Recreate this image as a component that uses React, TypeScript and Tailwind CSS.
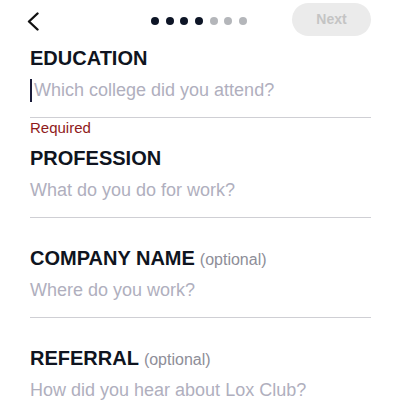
import React from "react";

const font = { fontFamily: '"Liberation Sans", Arial, sans-serif' };

function Field({
  label,
  optional,
  placeholder,
  cursor,
  required,
}: {
  label: string;
  optional?: boolean;
  placeholder: string;
  cursor?: boolean;
  required?: boolean;
}) {
  return (
    <div>
      <div className="h-[24px] leading-[24px] flex items-baseline">
        <span className="text-[20px] font-bold text-[#0f1420]">{label}</span>
        {optional && (
          <span className="ml-[5px] text-[16px] text-[#8e8e98]">(optional)</span>
        )}
      </div>
      <div className="mt-[8px] h-[24px] flex items-center">
        {cursor && <div className="w-[2px] h-[23px] bg-[#1a1c3a] mr-[2px]" />}
        <span className="text-[18px] leading-[24px] text-[#b0afbe]">{placeholder}</span>
      </div>
      <div className="mt-[15px] h-px bg-[#cfcfd4]" />
      {required && (
        <div className="mt-[1px] h-[18px] leading-[18px] text-[15px] text-[#8f1b1b]">
          Required
        </div>
      )}
    </div>
  );
}

export default function App() {
  return (
    <div className="w-[400px] h-[406px] bg-white overflow-hidden" style={font}>
      <div className="h-[40px] grid grid-cols-[1fr_auto_1fr] items-center px-[27px] pr-[29px]">
        <div className="flex items-center">
          <svg width="12" height="19" viewBox="0 0 12 19" className="mt-[3px]">
            <polyline
              points="10.5,1.5 2,9.5 10.5,17.5"
              fill="none"
              stroke="#111"
              strokeWidth="2.4"
              strokeLinecap="round"
              strokeLinejoin="round"
            />
          </svg>
        </div>
        <div className="flex items-center gap-[6.7px] mt-[1px]">
          {[0, 1, 2, 3, 4, 5, 6].map((i) => (
            <div
              key={i}
              className={
                i < 4
                  ? "w-[8px] h-[8px] rounded-full bg-[#0d1526]"
                  : "w-[8px] h-[8px] rounded-full bg-[#b4b6ba]"
              }
            />
          ))}
        </div>
        <div className="flex justify-end">
          <div className="w-[79px] h-[33px] mt-[-1px] rounded-full bg-[#ebebeb] flex items-center justify-center text-[14px] font-bold text-[#c4c4c4]">
            Next
          </div>
        </div>
      </div>
      <div className="px-[30px] pr-[29px] pt-[6px]">
        <Field
          label="EDUCATION"
          placeholder="Which college did you attend?"
          cursor
          required
        />
        <div className="mt-[8.5px]">
          <Field label="PROFESSION" placeholder="What do you do for work?" />
        </div>
        <div className="mt-[28px]">
          <Field label="COMPANY NAME" optional placeholder="Where do you work?" />
        </div>
        <div className="mt-[28px]">
          <Field label="REFERRAL" optional placeholder="How did you hear about Lox Club?" />
        </div>
      </div>
    </div>
  );
}
